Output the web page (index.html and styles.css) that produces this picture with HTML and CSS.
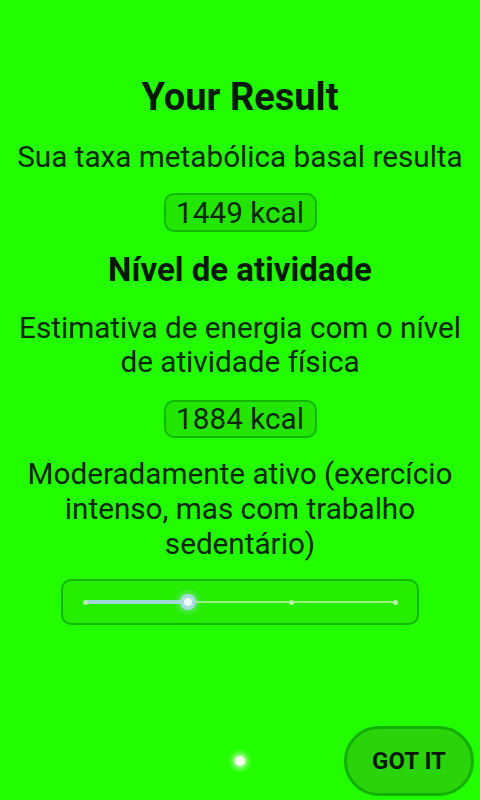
FILE: index.html
```html
<!DOCTYPE html>
<html lang="pt">
<head>
<meta charset="utf-8">
<link rel="stylesheet" href="styles.css">
</head>
<body>
<div class="screen">
  <main class="content">
    <h1 class="title">Your Result</h1>
    <p class="text t1">Sua taxa metabólica basal resulta</p>
    <div class="pill p1">1449 kcal</div>
    <h2 class="heading">Nível de atividade</h2>
    <p class="text t2">Estimativa de energia com o nível<br>de atividade física</p>
    <div class="pill p2">1884 kcal</div>
    <p class="text t3">Moderadamente ativo (exercício<br>intenso, mas com trabalho<br>sedentário)</p>
    <div class="slider">
      <div class="track">
        <div class="active" style="width:33.33%"></div>
        <span class="tick" style="left:0%"></span>
        <span class="tick" style="left:66.67%"></span>
        <span class="tick" style="left:100%"></span>
        <span class="thumb" style="left:33.33%"></span>
      </div>
    </div>
  </main>
  <footer class="footer">
    <div class="spacer"></div>
    <div class="dots"><span class="dot"></span></div>
    <div class="actions"><button class="got">GOT IT</button></div>
  </footer>
</div>
</body>
</html>
```
FILE: styles.css
```css
html, body { margin: 0; padding: 0; }
body {
  background: #22fe00;
  font-family: Roboto, "Liberation Sans", sans-serif;
  color: #0a2806;
}
.screen {
  width: 480px;
  height: 800px;
  display: flex;
  flex-direction: column;
}
.content {
  flex: 1;
  display: flex;
  flex-direction: column;
  align-items: center;
  padding-top: 79px;
}
.title {
  margin: 0;
  font-size: 38px;
  line-height: 36px;
  font-weight: 700;
  color: #061a03;
}
.text {
  margin: 0;
  font-size: 29.7px;
  line-height: 34px;
  text-align: center;
  font-weight: 400;
  white-space: nowrap;
}
.t1 { margin-top: 25px; }
.t2 { margin-top: 24px; }
.t3 { margin-top: 18px; line-height: 35px; }
.pill {
  box-sizing: border-box;
  background: #22e600;
  border: 2px solid #12b800;
  border-radius: 10px;
  font-size: 29.7px;
  line-height: 35px;
  text-align: center;
}
.p1 { margin-top: 19px; width: 153px; height: 39px; }
.p2 { margin-top: 21px; width: 153px; height: 38px; line-height: 34px; }
.heading {
  margin: 21px 0 0;
  font-size: 33px;
  line-height: 34px;
  font-weight: 700;
  color: #061a03;
}
.slider {
  box-sizing: border-box;
  margin-top: 18px;
  width: 358px;
  height: 46px;
  background: #25ee00;
  border: 2px solid #12b800;
  border-radius: 10px;
  padding: 0 22px;
  display: flex;
  align-items: center;
}
.track {
  position: relative;
  flex: 1;
  height: 2px;
  background: #9af07c;
}
.active {
  position: absolute;
  left: 0; top: -1px;
  height: 4px;
  background: #9fd9d6;
}
.tick {
  position: absolute;
  top: 50%;
  width: 5px; height: 5px;
  margin: -2.5px 0 0 -2.5px;
  border-radius: 50%;
  background: #b8f0a8;
}
.thumb {
  position: absolute;
  top: 50%;
  width: 8px; height: 8px;
  margin: -4px 0 0 -4px;
  border-radius: 50%;
  background: #eefcff;
  box-shadow: 0 0 0 4px #a6dbe0, 0 0 6px 6px rgba(170,220,240,0.5);
}
.footer {
  height: 74px;
  display: grid;
  grid-template-columns: 1fr auto 1fr;
  align-items: start;
}
.dots { display: flex; justify-content: center; padding-top: 30px; }
.dot {
  width: 10px; height: 10px;
  border-radius: 50%;
  background: #f4fff0;
  box-shadow: 0 0 5px 3px rgba(230,255,220,0.7);
}
.actions { display: flex; justify-content: flex-end; padding-right: 6px; }
.got {
  box-sizing: border-box;
  width: 130px;
  height: 70px;
  border-radius: 35px;
  background: #2bd40a;
  border: 3px solid #14b000;
  font-family: Roboto, "Liberation Sans", sans-serif;
  font-weight: 700;
  font-size: 24px;
  color: #061a03;
  padding: 0;
}
```
